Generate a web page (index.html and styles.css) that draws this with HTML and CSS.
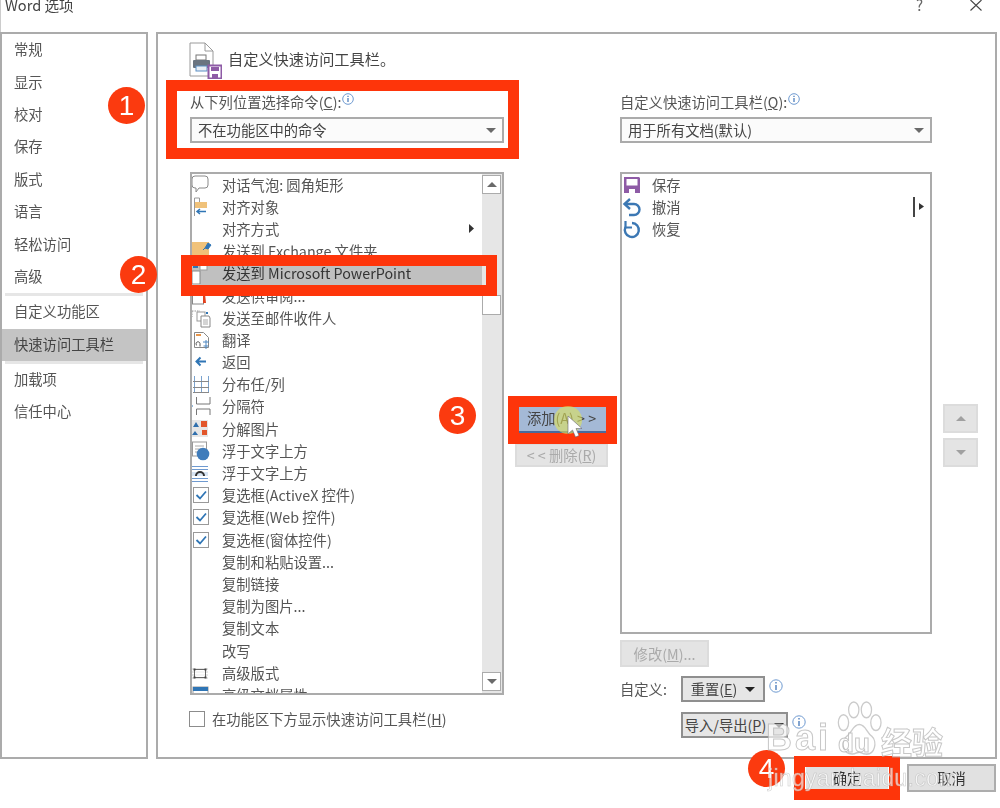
FILE: index.html
```html
<!DOCTYPE html>
<html lang="zh-CN">
<head>
<meta charset="utf-8">
<title>Word 选项</title>
<link rel="stylesheet" href="styles.css">
</head>
<body>
<div class="app">
  <header class="titlebar">
    <span class="title">Word 选项</span>
    <span class="help">?</span>
    <svg class="close" viewBox="0 0 12 11" width="12" height="11"><path d="M.5 0l11 10.500M11.500 0l-11 10.500" fill="none" stroke="#444" stroke-width="1.100"/></svg>
  </header>
  <div class="body">
    <nav class="sidebar">
      <div class="nav-item">常规</div>
      <div class="nav-item">显示</div>
      <div class="nav-item">校对</div>
      <div class="nav-item">保存</div>
      <div class="nav-item">版式</div>
      <div class="nav-item">语言</div>
      <div class="nav-item">轻松访问</div>
      <div class="nav-item">高级</div>
      <div class="nav-sep"></div>
      <div class="nav-item">自定义功能区</div>
      <div class="nav-item selected">快速访问工具栏</div>
      <div class="nav-sep"></div>
      <div class="nav-item">加载项</div>
      <div class="nav-item">信任中心</div>
    </nav>
    <main class="main">
      <div class="heading">
        <svg class="heading-icon" viewBox="0 0 33 37" width="33" height="37">
          <path d="M1 1h15l8 8v25H1z" fill="#fff" stroke="#9a9a9a"/><path d="M16 1v8h8" fill="none" stroke="#9a9a9a"/>
          <rect x="7" y="13" width="10" height="5" fill="#fff" stroke="#777"/>
          <rect x="4" y="18" width="17" height="8" rx="1" fill="#6a7480"/>
          <rect x="7" y="24" width="11" height="5" fill="#e9eef5" stroke="#5b8fc4"/>
          <rect x="19.500" y="23.500" width="13" height="13" fill="#fff" stroke="#8e5ba6" stroke-width="2"/>
          <rect x="22" y="25" width="8" height="4" fill="#8e5ba6"/><rect x="23" y="32" width="6" height="4" fill="#8e5ba6"/>
        </svg>
        <span class="heading-text">自定义快速访问工具栏。</span>
      </div>
      <div class="columns">
        <section class="col col-left">
          <div class="field-label">从下列位置选择命令(<u>C</u>):<svg class="info" viewBox="0 0 12 12" width="12" height="12"><circle cx="6" cy="6" r="5.300" fill="#fff" stroke="#6f9ad0"/><path d="M6 5v4M6 2.800v1.200" stroke="#3f74b8" stroke-width="1.200"/></svg></div>
          <div class="select"><span>不在功能区中的命令</span><i class="caret"></i></div>
          <div class="list list-left">
            <div class="rows">
              <div class="row"><svg class="ic" viewBox="0 0 24 22"><path d="M5 2h10q3 0 3 3v6q0 3-3 3H9l-3 4v-4H5q-3 0-3-3V5q0-3 3-3z" fill="#fff" stroke="#8a8a8a"/></svg>对话气泡: 圆角矩形</div>
              <div class="row"><svg class="ic" viewBox="0 0 24 22"><path d="M4.500 2v18M4.500 2h5v4" fill="none" stroke="#999"/><rect x="5" y="6" width="12" height="6" fill="#f0c27a"/><path d="M16 15.500H7M10 13l-3 2.500 3 2.500" fill="none" stroke="#2f75b5" stroke-width="1.500"/></svg>对齐对象</div>
              <div class="row"><span class="row-slot"></span>对齐方式<svg class="tri" viewBox="0 0 5 9" width="5" height="9"><path d="M0 0l5 4.500L0 9z" fill="#333"/></svg></div>
              <div class="row"><svg class="ic" viewBox="0 0 24 22"><path d="M2 2h17v13H2z" fill="#f0c27a"/><path d="M15 8l3-5 3 2-3 4zM15 8l-2 2" fill="#2f75b5" stroke="#2f75b5"/></svg>发送到 Exchange 文件夹</div>
              <div class="row row-active"><svg class="ic" viewBox="0 0 24 22"><rect x="2" y="9" width="8" height="13" fill="#fff" stroke="#888"/><rect x="10" y="3" width="7" height="5" fill="#fff" stroke="#999"/><path d="M3 5h5" stroke="#2f75b5" stroke-width="2"/></svg>发送到 Microsoft PowerPoint</div>
              <div class="row"><svg class="ic" viewBox="0 0 24 22"><rect x="2.500" y="1" width="11" height="18" fill="#fff" stroke="#888"/><path d="M13 4h6l-4 5 1 9h-3z" fill="#e2411e"/></svg>发送供审阅...</div>
              <div class="row"><svg class="ic" viewBox="0 0 24 22"><path d="M2 4h8M2 4v6" fill="none" stroke="#999" stroke-dasharray="1.500 1"/><rect x="7" y="5" width="8" height="9" fill="#fff" stroke="#999"/><path d="M11 9h8l1 2v9h-9z" fill="#fff" stroke="#888"/><path d="M13 13h5M13 15h5M13 17h5" stroke="#aaa"/><path d="M16 6h2" stroke="#2f75b5" stroke-width="2"/></svg>发送至邮件收件人</div>
              <div class="row"><svg class="ic" viewBox="0 0 24 22"><path d="M4.500 3.500h9l5 5v10h-14z" fill="#fff" stroke="#888"/><path d="M6 6h5" stroke="#e8964a" stroke-width="2"/><path d="M7 16.500a2 2 0 1 1 3-2v3" fill="none" stroke="#555"/><path d="M13 13h6M16 11v9M13.500 17h5" stroke="#4d86c0" fill="none"/></svg>翻译</div>
              <div class="row"><svg class="ic" viewBox="0 0 24 22"><path d="M16 10.500H7M10.500 6.500l-4 4 4 4" fill="none" stroke="#2f75b5" stroke-width="2"/></svg>返回</div>
              <div class="row"><svg class="ic" viewBox="0 0 24 22"><path d="M4.500 3v17M11.500 3v17M18.500 3v17" fill="none" stroke="#7aa3cf"/><path d="M3 8.500h16M3 14.500h16M3 19.500h16" fill="none" stroke="#888"/></svg>分布任/列</div>
              <div class="row"><svg class="ic" viewBox="0 0 24 22"><path d="M0 8l3 3-3 3z" fill="#2f75b5"/><path d="M6.500 2v7h13.500V2M6.500 20v-6h13.500v6" fill="none" stroke="#777"/></svg>分隔符</div>
              <div class="row"><svg class="ic" viewBox="0 0 24 22"><rect x="1" y="2" width="17" height="17" fill="#e6e6e6"/><path d="M3 9l3-5 3 5zM2 17l3-4 3 4z" fill="#2f6fad"/><rect x="11" y="3" width="6" height="6" fill="#e2552a"/><rect x="12" y="12" width="5" height="5" fill="#e2552a"/></svg>分解图片</div>
              <div class="row"><svg class="ic" viewBox="0 0 24 22"><rect x="2.500" y="2" width="14" height="14" fill="#fff" stroke="#999"/><path d="M5 6h9M5 9h6M5 12h4" stroke="#aaa"/><circle cx="13" cy="14" r="6.300" fill="#3f7cbb"/></svg>浮于文字上方</div>
              <div class="row"><svg class="ic" viewBox="0 0 24 22"><path d="M2 4.500h16M2 7.500h16M2 16.500h16M2 19.500h16" stroke="#6f9ad0"/><path d="M2 10h16v4H2z" fill="#d8e4f2"/><path d="M6 14a4 4 0 0 1 8 0" fill="none" stroke="#333" stroke-width="2"/></svg>浮于文字上方</div>
              <div class="row"><svg class="ic" viewBox="0 0 24 22"><rect x="3.500" y="3.500" width="15" height="15" fill="#fff" stroke="#999"/><path d="M6.500 11l3.500 3.500 6-7" fill="none" stroke="#2f75b5" stroke-width="1.800"/></svg>复选框(ActiveX 控件)</div>
              <div class="row"><svg class="ic" viewBox="0 0 24 22"><rect x="3.500" y="3.500" width="15" height="15" fill="#fff" stroke="#999"/><path d="M6.500 11l3.500 3.500 6-7" fill="none" stroke="#2f75b5" stroke-width="1.800"/></svg>复选框(Web 控件)</div>
              <div class="row"><svg class="ic" viewBox="0 0 24 22"><rect x="3.500" y="3.500" width="15" height="15" fill="#fff" stroke="#999"/><path d="M6.500 11l3.500 3.500 6-7" fill="none" stroke="#2f75b5" stroke-width="1.800"/></svg>复选框(窗体控件)</div>
              <div class="row"><span class="row-slot"></span>复制和粘贴设置...</div>
              <div class="row"><span class="row-slot"></span>复制链接</div>
              <div class="row"><span class="row-slot"></span>复制为图片...</div>
              <div class="row"><span class="row-slot"></span>复制文本</div>
              <div class="row"><span class="row-slot"></span>改写</div>
              <div class="row"><svg class="ic" viewBox="0 0 24 22"><path d="M2 7h16M2 10h16M2 13h16M2 16h16" stroke="#ccc"/><rect x="4.500" y="7.500" width="11" height="8" fill="#fff" fill-opacity=".6" stroke="#666"/><path d="M3.500 6.500h2v2h-2zM14.500 6.500h2v2h-2zM3.500 14.500h2v2h-2zM14.500 14.500h2v2h-2z" fill="#444"/></svg>高级版式</div>
              <div class="row"><svg class="ic" viewBox="0 0 24 22"><rect x="3" y="3" width="15" height="17" fill="#fff" stroke="#999"/><rect x="3" y="3" width="15" height="4" fill="#2f75b5"/></svg>高级文档属性</div>
            </div>
            <div class="scrollbar">
              <div class="sb-btn"><i class="caret caret-up"></i></div>
              <div class="sb-thumb"></div>
              <div class="sb-btn sb-down"><i class="caret"></i></div>
            </div>
          </div>
          <label class="check-row"><span class="checkbox"></span>在功能区下方显示快速访问工具栏(<u>H</u>)</label>
        </section>
        <section class="col col-mid">
          <div class="btn btn-add">添加(A) &gt; &gt;</div>
          <div class="btn btn-off btn-remove">&lt; &lt; 删除(<u>R</u>)</div>
        </section>
        <section class="col col-right">
          <div class="field-label">自定义快速访问工具栏(<u>Q</u>):<svg class="info" viewBox="0 0 12 12" width="12" height="12"><circle cx="6" cy="6" r="5.300" fill="#fff" stroke="#6f9ad0"/><path d="M6 5v4M6 2.800v1.200" stroke="#3f74b8" stroke-width="1.200"/></svg></div>
          <div class="select"><span>用于所有文档(默认)</span><i class="caret"></i></div>
          <div class="list list-right">
            <div class="rows">
              <div class="row"><svg class="ic-right" viewBox="0 0 20 22"><path d="M2 3h15l1 1v15H2z" fill="#8e5ba6"/><rect x="4.500" y="5" width="11" height="6.500" fill="#fff"/><rect x="7" y="15" width="6" height="4" fill="#fff"/></svg>保存</div>
              <div class="row"><svg class="ic-right" viewBox="0 0 20 22"><path d="M3 8h9a5.500 5.500 0 0 1 0 11H7" fill="none" stroke="#3c78b4" stroke-width="2.400"/><path d="M8 3L2.500 8 8 13" fill="none" stroke="#3c78b4" stroke-width="2.400"/></svg>撤消<span class="sep-mark"><i class="sep-line"></i><svg viewBox="0 0 5 7" width="5" height="7"><path d="M0 0l5 3.500L0 7z" fill="#333"/></svg></span></div>
              <div class="row"><svg class="ic-right" viewBox="0 0 20 22"><path d="M10 5a7 7 0 1 1-6.500 4" fill="none" stroke="#3c78b4" stroke-width="2.400"/><path d="M3.500 3v6.500H10" fill="none" stroke="#3c78b4" stroke-width="2.200"/></svg>恢复</div>
            </div>
          </div>
          <div class="btn btn-off btn-modify">修改(<u>M</u>)...</div>
          <div class="custom-row">
            <span class="custom-label">自定义:</span>
            <div class="btn btn-drop btn-reset">重置(<u>E</u>)<i class="caret caret-dark"></i></div>
            <svg class="info info-big" viewBox="0 0 14 14" width="14" height="14"><circle cx="7" cy="7" r="6.200" fill="#fff" stroke="#6f9ad0"/><path d="M7 6v5M7 3v1.500" stroke="#3f74b8" stroke-width="1.300"/></svg>
          </div>
          <div class="custom-row custom-row-2">
            <div class="btn btn-drop btn-import">导入/导出(<u>P</u>)<i class="caret caret-dark"></i></div>
            <svg class="info info-big" viewBox="0 0 14 14" width="14" height="14"><circle cx="7" cy="7" r="6.200" fill="#fff" stroke="#6f9ad0"/><path d="M7 6v5M7 3v1.500" stroke="#3f74b8" stroke-width="1.300"/></svg>
          </div>
        </section>
        <section class="col col-order">
          <div class="btn btn-off btn-order"><i class="caret caret-up caret-grey"></i></div>
          <div class="btn btn-off btn-order"><i class="caret caret-grey"></i></div>
        </section>
      </div>
    </main>
  </div>
  <footer class="footer">
    <div class="btn btn-ok">确定</div>
    <div class="btn btn-cancel">取消</div>
  </footer>

  <div class="mark mark-1"></div>
  <div class="mark mark-2"></div>
  <div class="mark mark-3"></div>
  <div class="mark mark-4"></div>
  <div class="badge badge-1">1</div>
  <div class="badge badge-2">2</div>
  <div class="badge badge-3">3</div>
  <div class="badge badge-4">4</div>
  <svg class="pointer" viewBox="0 0 40 40" width="40" height="40">
    <circle cx="16" cy="16" r="14" fill="#dfe25a" fill-opacity=".6"/>
    <path d="M16 12v18l4.500-4 3 7 3.500-1.500-3-7h6z" fill="#fff" stroke="#667" stroke-width=".6"/>
  </svg>
  <svg class="paw" viewBox="0 0 62 58" width="49" height="57" preserveAspectRatio="none">
    <g fill="rgba(255,255,255,.55)" stroke="rgba(185,185,185,.75)" stroke-width="1.600">
      <ellipse cx="12" cy="22" rx="6.500" ry="8"/>
      <ellipse cx="25" cy="9" rx="6.500" ry="8"/>
      <ellipse cx="41" cy="9" rx="6.500" ry="8"/>
      <ellipse cx="53" cy="22" rx="6.500" ry="8"/>
      <path d="M32 24c8 0 9 8 16 12 7 5 4 19-8 18-4 0-6-2-8-2s-5 2-9 2C11 54 8 41 16 36c7-4 8-12 16-12z"/>
    </g>
  </svg>
  <div class="wm wm-bai">Bai</div>
  <div class="wm wm-du">du</div>
  <div class="wm wm-jy">经验</div>
  <div class="wm wm-url">jingyan.baidu.com</div>
</div>
</body>
</html>
```
FILE: styles.css
```css
* { box-sizing: border-box; }
html, body { margin: 0; padding: 0; background: #fff; overflow: hidden; }
.app {
  position: relative;
  width: 1000px;
  height: 808px;
  display: flex;
  flex-direction: column;
  padding-right: 3px;
  font: 14.3px/20px "Noto Sans CJK SC", "Noto Sans", sans-serif;
  color: #555;
  filter: blur(.55px);
  overflow: hidden;
}
u { text-underline-offset: 1px; }

.titlebar { height: 32px; flex: none; display: flex; align-items: flex-start; border-left: 1px solid #ccc; color: #444; }
.title { margin: -5px 0 0 4px; font-size: 14.6px; }
.help { margin: -5px 0 0 auto; font-size: 15px; color: #666; }
.close { margin: 0 15px 0 47px; }

.body { height: 727px; flex: none; display: flex; gap: 8px; }
.sidebar { width: 148px; flex: none; border: 2px solid #ababab; }
.nav-item { height: 32.4px; padding: 0 0 2px 12px; display: flex; align-items: center; }
.nav-item.selected { background: #c4c4c4; color: #444; }
.nav-sep { height: 3px; margin: 0 3px; background: #e6e6e6; }

.main { flex: 1; border: 2px solid #ababab; padding: 8px 0 0 31px; min-width: 0; }
.heading { height: 36px; display: flex; align-items: center; }
.heading-icon { flex: none; }
.heading-text { margin: 0 0 4px 6px; font-size: 15.2px; color: #444; }

.columns { display: flex; margin: 14px 0 0 1px; }
.col-left { width: 314px; flex: none; }
.col-mid { width: 116px; flex: none; padding: 313px 0 0 11px; }
.col-right { width: 312px; flex: none; }
.col-order { width: 35px; flex: none; margin-left: 11px; padding-top: 312px; display: flex; flex-direction: column; gap: 5px; }

.field-label { height: 25px; display: flex; align-items: flex-start; }
.info { flex: none; margin: 1px 0 0 1px; }
.select { height: 26px; border: 2px solid #ababab; background: #fbfbfb; padding: 0 6px; display: flex; align-items: center; justify-content: space-between; color: #444; }
.caret { width: 0; height: 0; border: 5px solid transparent; border-top-color: #6a6a6a; border-bottom: 0; }
.caret-up { border-top: 0; border-bottom: 5px solid #6a6a6a; }
.caret-dark { border-top-color: #222; margin-left: 8px; }
.caret-grey { border-top-color: #a0a0a0; }
.caret-up.caret-grey { border-top-color: transparent; border-bottom-color: #a0a0a0; }

.list { margin-top: 29px; border: 2px solid #ababab; background: #fff; display: flex; overflow: hidden; }
.list-left { height: 523px; }
.list-right { height: 462px; }
.rows { flex: 1; min-width: 0; }
.row { height: 22.2px; padding-bottom: 1px; display: flex; align-items: center; white-space: nowrap; }
.row-active { background: #c0c0c0; color: #333; }
.ic { width: 24px; height: 22px; flex: none; margin: 0 8px 0 -2px; }
.ic-right { width: 20px; height: 22px; flex: none; margin: 0 10px 0 0; }
.row-slot { width: 30px; flex: none; }
.tri { margin: 0 8px 0 auto; }
.sep-mark { margin: 0 6px 0 auto; display: flex; align-items: center; gap: 4px; }
.sep-line { width: 2px; height: 20px; background: #444; }

.scrollbar { width: 20px; flex: none; background: #e6e6e6; display: flex; flex-direction: column; padding: 1px 1px 2px 0; }
.sb-btn { height: 19px; background: #fff; border: 1px solid #ababab; display: flex; align-items: center; justify-content: center; }
.sb-thumb { height: 20px; margin-top: 101px; background: #fff; border: 1px solid #ababab; }
.sb-down { margin-top: auto; }

.check-row { margin-top: 16px; height: 16px; display: flex; align-items: center; }
.checkbox { width: 16px; height: 16px; border: 1.500px solid #8c8c8c; margin: 0 7px 0 -1px; background: #fff; }

.btn { display: flex; align-items: center; justify-content: center; white-space: nowrap; }
.btn-off { background: #e4e4e4; border: 2px solid #dcdcdc; color: #aaa; }
.btn-add { width: 93px; height: 28px; background: #a4b9d6; border-bottom: 2px solid #4a6a9c; color: #444; }
.btn-remove { width: 93px; height: 24px; margin-top: 10px; }
.btn-modify { width: 89px; height: 27px; margin-top: 6px; }
.btn-order { height: 29px; }
.btn-drop { height: 26px; background: #e6e6e6; border: 2px solid #8f8f8f; color: #444; }

.custom-row { display: flex; align-items: flex-start; margin-top: 9px; }
.custom-row-2 { margin-top: 10px; padding-left: 61px; }
.custom-label { width: 61px; line-height: 26px; }
.btn-reset { width: 84px; }
.btn-import { width: 107px; }
.info-big { margin: 3px 0 0 4px; }

.footer { flex: 1; display: flex; justify-content: flex-end; gap: 19px; padding: 5px 1px 0 0; }
.btn-ok { width: 82px; height: 22px; margin: 3px 0 0 0; background: #e1e1e1; color: #333; }
.btn-cancel { width: 89px; height: 28px; background: #e1e1e1; border: 2px solid #adadad; color: #333; }

.mark { position: absolute; border: 11px solid #fe350a; }
.mark-1 { left: 166px; top: 80px; width: 353px; height: 79px; }
.mark-2 { left: 181px; top: 255px; width: 316px; height: 41px; }
.mark-3 { left: 508px; top: 396px; width: 109px; height: 48px; }
.mark-4 { left: 794px; top: 756px; width: 106px; height: 44px; }

.badge { position: absolute; width: 37px; height: 37px; border-radius: 50%; background: #fb3a0f; color: #fff; font: 28px/37px "Liberation Sans", sans-serif; text-align: center; }
.badge-1 { left: 108px; top: 87px; }
.badge-2 { left: 120px; top: 256px; }
.badge-3 { left: 439px; top: 397px; }
.badge-4 { left: 748px; top: 750px; }

.pointer { position: absolute; left: 552px; top: 404px; }
.paw { position: absolute; left: 834px; top: 701px; }
.wm { position: absolute; color: rgba(255,255,255,.65); -webkit-text-stroke: 1px rgba(175,175,175,.7); font-family: "Liberation Sans", sans-serif; font-weight: 700; white-space: nowrap; }
.wm-bai { left: 766px; top: 716px; font-size: 36px; line-height: 44px; letter-spacing: 3px; }
.wm-du { left: 838px; top: 728px; font-size: 26px; line-height: 30px; }
.wm-jy { left: 881px; top: 722px; font-family: "Noto Sans CJK SC", sans-serif; font-size: 31px; line-height: 38px; }
.wm-url { left: 768px; top: 764px; font-size: 23px; line-height: 28px; font-weight: 400; -webkit-text-stroke: .6px rgba(175,175,175,.6); letter-spacing: .3px; }
```
